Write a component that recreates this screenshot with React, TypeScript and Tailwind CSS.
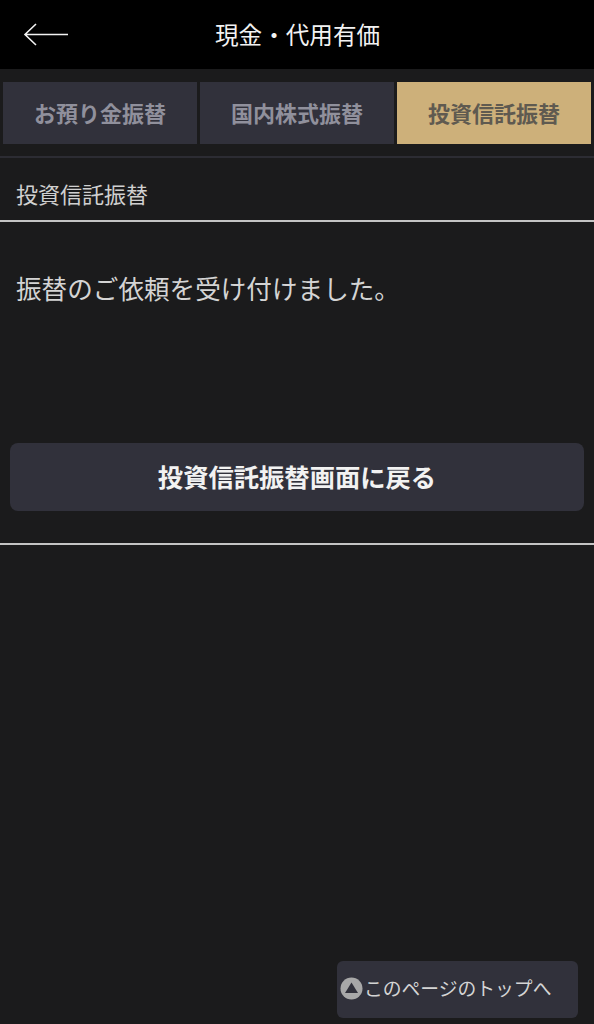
import React from "react";

const font = { fontFamily: '"Noto Sans CJK JP", "Liberation Sans", sans-serif' };

const Tab = ({ label, active }: { label: string; active?: boolean }) => (
    <div
        className={
            active
                ? "flex h-[62px] w-[194px] items-center justify-center bg-[#cdb07a] pb-[2px] text-[22px] font-bold text-[#5f5a50]"
                : "flex h-[62px] w-[194px] items-center justify-center bg-[#31313b] pb-[2px] text-[22px] font-bold text-[#90909c]"
        }
    >
        {label}
    </div>
);

export default function App() {
    return (
        <div style={font} className="flex h-[1024px] w-[594px] flex-col overflow-hidden bg-[#1b1b1c]">
            <header className="flex h-[69px] shrink-0 items-center bg-black pl-[23px]">
                <svg width="46" height="24" viewBox="0 0 46 24" fill="none" stroke="#f2f2f2" strokeWidth="1.6">
                    <path d="M45 11.5H2M13 1L2 11.5L13 22" />
                </svg>
                <h1 className="ml-[146px] text-[23.6px] leading-none font-normal text-[#f2f2f2]">現金・代用有価</h1>
            </header>

            <nav className="flex gap-[3px] pt-[13px] pl-[3px]">
                <Tab label="お預り金振替" />
                <Tab label="国内株式振替" />
                <Tab label="投資信託振替" active />
            </nav>

            <div className="mt-[12px] h-[2px] bg-[#2c2c33]" />

            <div className="flex h-[64px] items-center border-b-2 border-[#c4c4c4] pt-[8px] pl-4 text-[22px] text-[#d0d0d0]">投資信託振替</div>

            <p className="mt-[48px] pl-4 text-[25.6px] leading-[36px] text-[#d4d4d4]">振替のご依頼を受け付けました。</p>

            <div className="mx-[10px] mt-[137px] flex h-[68px] items-center justify-center rounded-lg bg-[#31313b] text-[25.3px] font-bold text-[#f2f2f2]">
                投資信託振替画面に戻る
            </div>

            <div className="mt-[32px] h-[2px] bg-[#c4c4c4]" />

            <div className="mt-auto mr-4 mb-[6px] flex h-[57px] w-[241px] items-center gap-[1px] self-end rounded-md bg-[#31313b] pb-[2px] pl-[3px] text-[18.8px] text-[#d4d4d4]">
                <svg width="23" height="23" viewBox="0 0 23 23">
                    <circle cx="11.5" cy="11.5" r="11" fill="#a8a8a8" />
                    <path d="M11.5 5.5L18 16H5Z" fill="#31313b" />
                </svg>
                <span>このページのトップへ</span>
            </div>
        </div>
    );
}
